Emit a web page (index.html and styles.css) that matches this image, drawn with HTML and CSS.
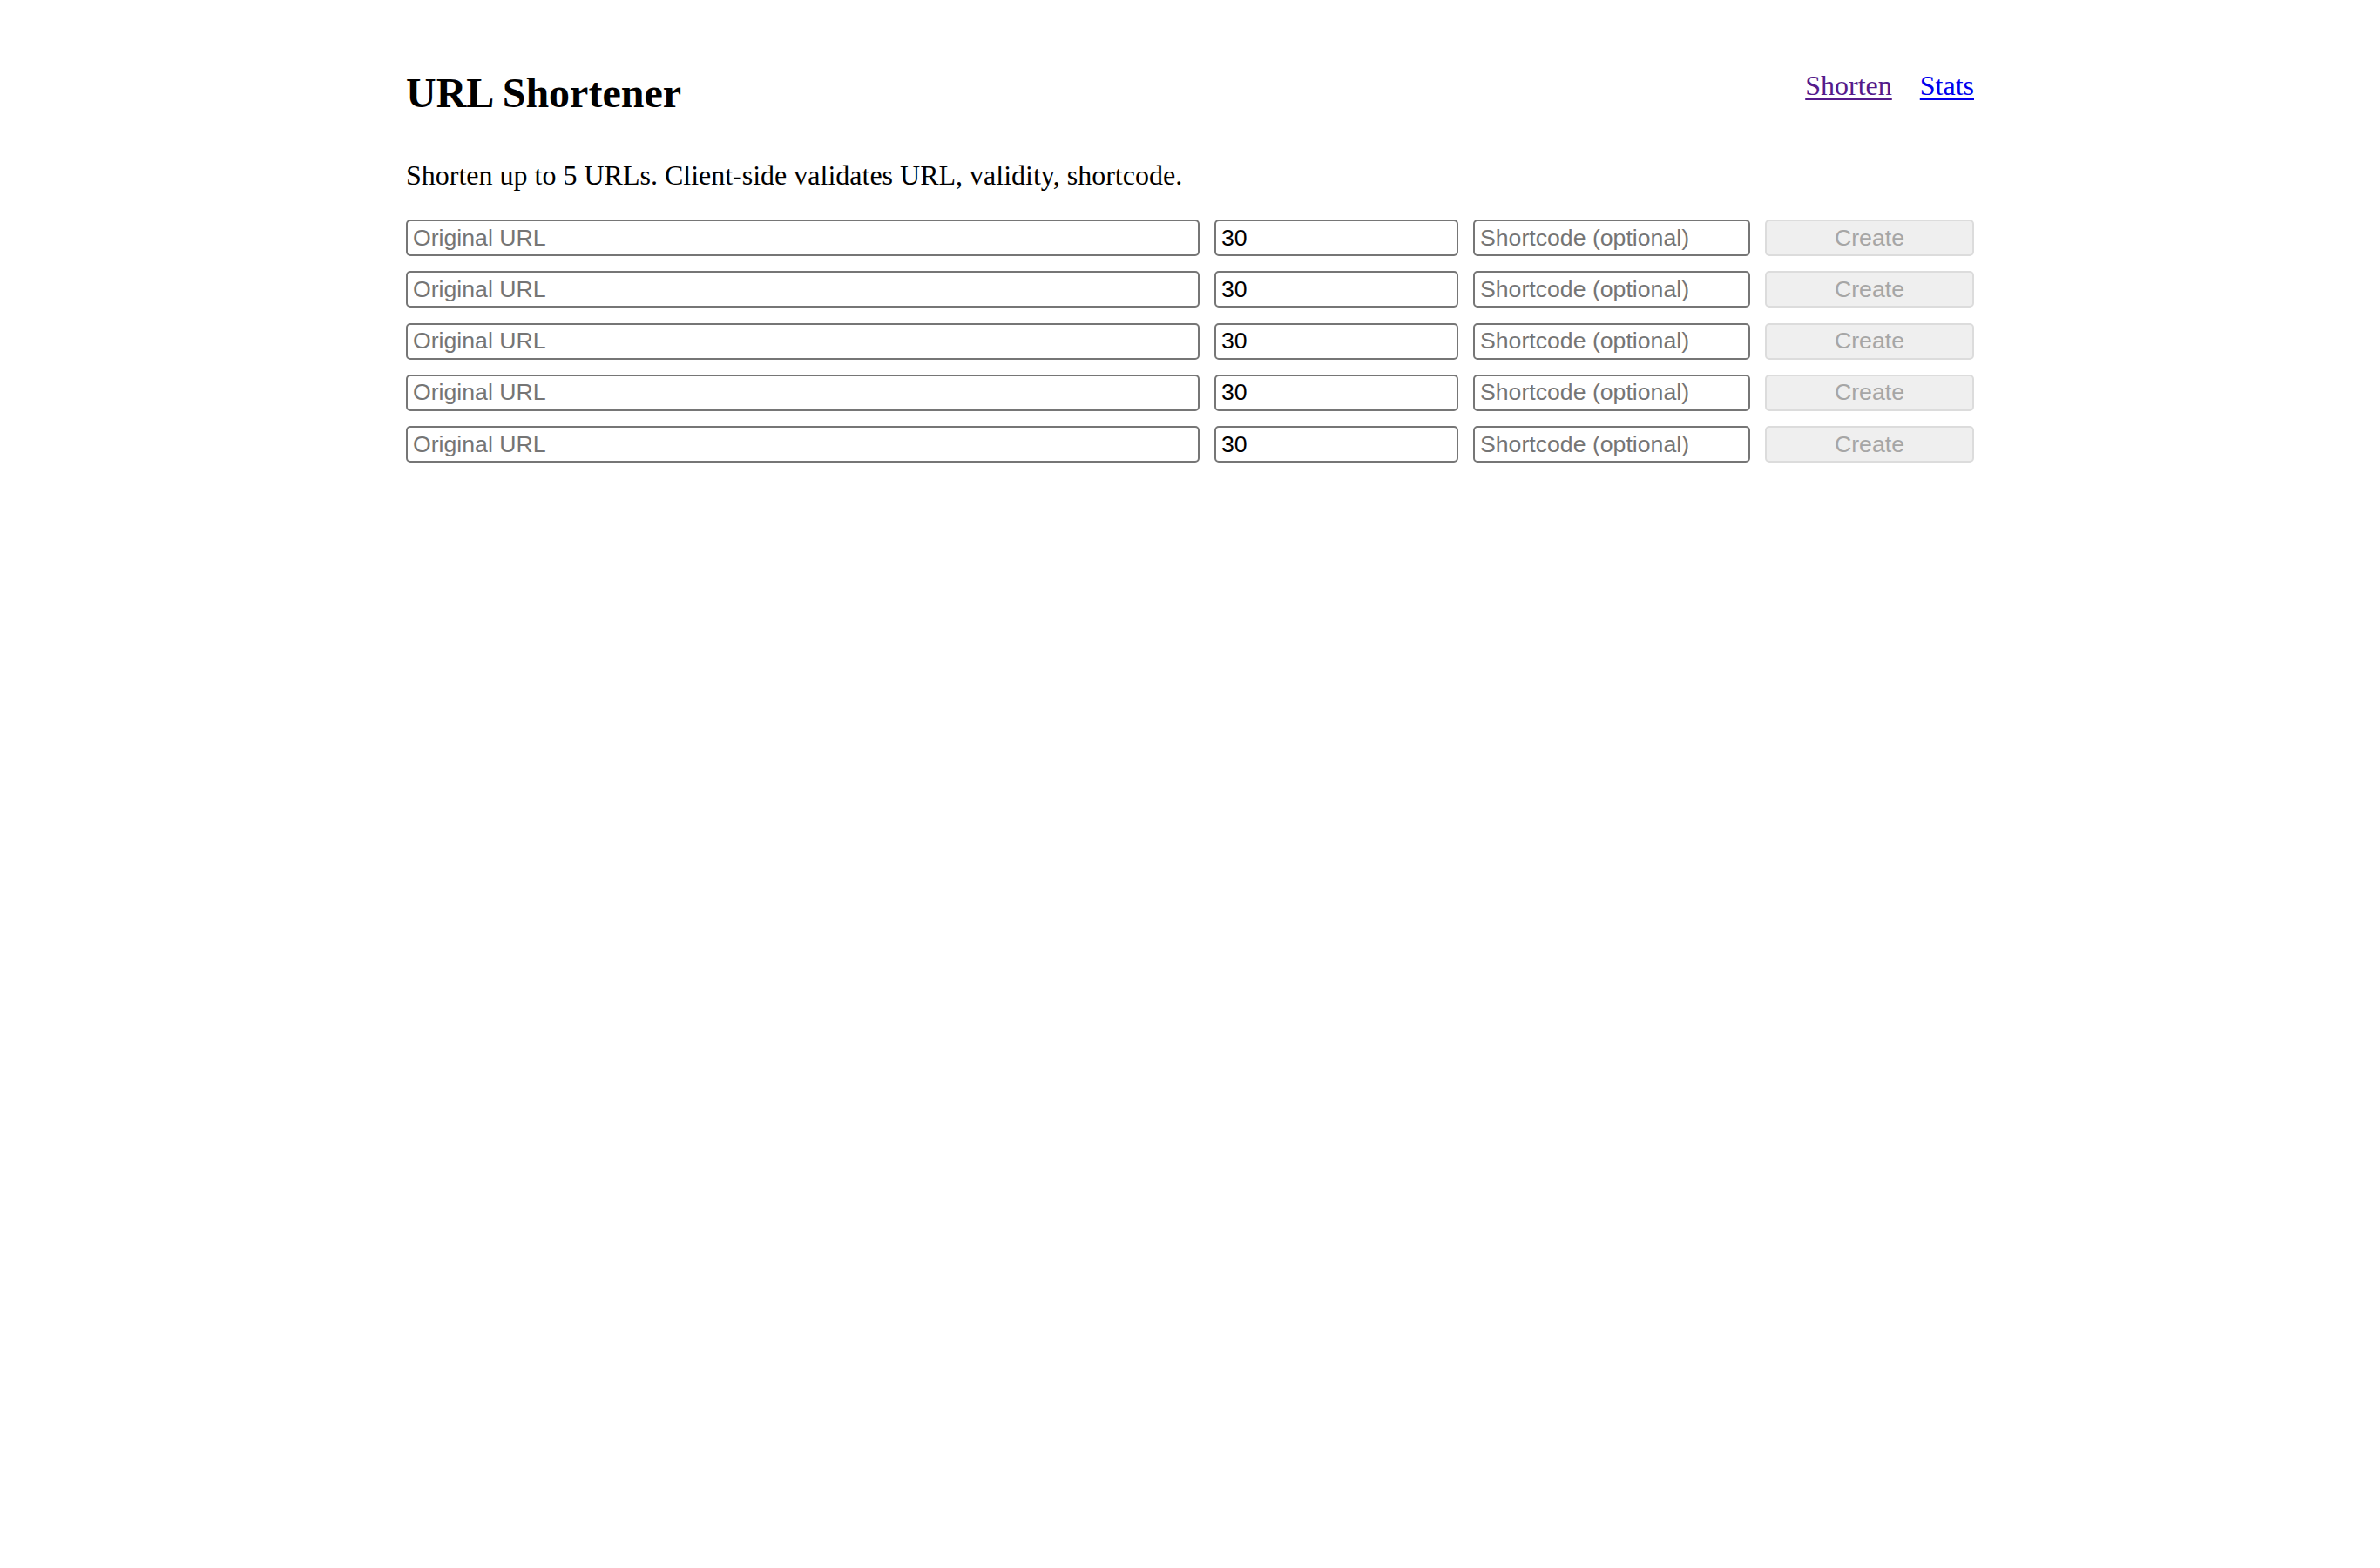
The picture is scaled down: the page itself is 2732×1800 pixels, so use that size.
FILE: index.html
```html
<!DOCTYPE html>
<html lang="en">
<head>
<meta charset="utf-8">
<title>URL Shortener</title>
<link rel="stylesheet" href="styles.css">
</head>
<body>
<div class="container">
  <header class="header">
    <h2 class="title">URL Shortener</h2>
    <nav class="nav">
      <a class="nav-link visited" href="#shorten">Shorten</a>
      <a class="nav-link" href="#stats">Stats</a>
    </nav>
  </header>
  <p class="intro">Shorten up to 5 URLs. Client-side validates URL, validity, shortcode.</p>
  <div class="rows">
    <div class="row">
      <input class="field" type="text" placeholder="Original URL">
      <input class="field num" type="number" value="30">
      <input class="field" type="text" placeholder="Shortcode (optional)">
      <button class="btn" disabled>Create</button>
    </div>
    <div class="row">
      <input class="field" type="text" placeholder="Original URL">
      <input class="field num" type="number" value="30">
      <input class="field" type="text" placeholder="Shortcode (optional)">
      <button class="btn" disabled>Create</button>
    </div>
    <div class="row">
      <input class="field" type="text" placeholder="Original URL">
      <input class="field num" type="number" value="30">
      <input class="field" type="text" placeholder="Shortcode (optional)">
      <button class="btn" disabled>Create</button>
    </div>
    <div class="row">
      <input class="field" type="text" placeholder="Original URL">
      <input class="field num" type="number" value="30">
      <input class="field" type="text" placeholder="Shortcode (optional)">
      <button class="btn" disabled>Create</button>
    </div>
    <div class="row">
      <input class="field" type="text" placeholder="Original URL">
      <input class="field num" type="number" value="30">
      <input class="field" type="text" placeholder="Shortcode (optional)">
      <button class="btn" disabled>Create</button>
    </div>
  </div>
</div>
</body>
</html>
```
FILE: styles.css
```css
html, body {
  margin: 0;
  padding: 0;
  background: #ffffff;
}

body {
  font-family: "Liberation Serif", "Times New Roman", serif;
  color: #000000;
}

.container {
  width: 1800px;
  margin: 0 auto;
  padding-top: 80px;
}

.header {
  display: flex;
  justify-content: space-between;
  align-items: flex-start;
}

.title {
  margin: 0;
  font-size: 48px;
  font-weight: bold;
  line-height: 53px;
}

.nav {
  display: flex;
  gap: 32px;
  font-size: 32px;
  line-height: 37px;
}

.nav-link {
  color: #0000ee;
  text-decoration: underline;
  text-decoration-thickness: 2px;
  text-underline-offset: 4px;
}

.nav-link.visited {
  color: #551a8b;
}

.intro {
  margin: 50px 0 32px 0;
  font-size: 32px;
  line-height: 37px;
}

.rows {
  display: flex;
  flex-direction: column;
  gap: 17.25px;
}

.row {
  display: grid;
  grid-template-columns: 1fr 280px 318px 240px;
  column-gap: 17px;
}

.field {
  box-sizing: border-box;
  height: 42px;
  margin: 0;
  padding: 2px 6px;
  border: 2px solid #767676;
  border-radius: 5px;
  background: #ffffff;
  font-family: "Liberation Sans", Arial, sans-serif;
  font-size: 26.67px;
  color: #000000;
  outline: none;
  min-width: 0;
}

.field::placeholder {
  color: #757575;
  opacity: 1;
}

.num {
  -moz-appearance: textfield;
}

.num::-webkit-inner-spin-button,
.num::-webkit-outer-spin-button {
  -webkit-appearance: none;
  margin: 0;
}

.btn {
  box-sizing: border-box;
  height: 42px;
  margin: 0;
  padding: 2px 12px;
  border: 2px solid #dcdcdc;
  border-radius: 5px;
  background: #efefef;
  color: #a6a6a6;
  font-family: "Liberation Sans", Arial, sans-serif;
  font-size: 26.67px;
  text-align: center;
}
```
